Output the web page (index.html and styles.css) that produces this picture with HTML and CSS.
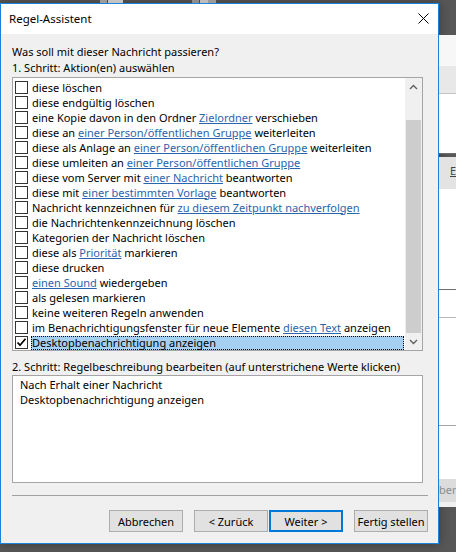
FILE: index.html
```html
<!DOCTYPE html>
<html lang="de">
<head>
    <meta charset="UTF-8">
    <meta name="viewport" content="width=device-width, initial-scale=1.0">
    <title>Regel-Assistent</title>
    <link rel="stylesheet" href="styles.css">
</head>
<body>
    <div class="desk">
        <!-- Rand des Fensters dahinter -->
        <div class="behind-top">
            <span class="seg seg-a"></span>
            <span class="seg seg-b"></span>
            <span class="seg seg-c"></span>
            <span class="seg seg-d"></span>
            <span class="seg seg-e"></span>
        </div>

        <div class="dialog">
            <div class="titlebar">
                <span class="title">Regel-Assistent</span>
                <svg class="close" width="11" height="11" viewBox="0 0 11 11">
                    <path d="M0.5 0.5 L10.5 10.5 M10.5 0.5 L0.5 10.5" stroke="#000" stroke-width="1" fill="none"/>
                </svg>
            </div>

            <div class="content">
                <p class="prompt">Was soll mit dieser Nachricht passieren?</p>
                <p class="prompt">1. Schritt: Aktion(en) auswählen</p>

                <div class="listbox">
                    <ul class="actions">
                        <li class="action"><span class="check"></span><span class="label">diese löschen</span></li>
                        <li class="action"><span class="check"></span><span class="label">diese endgültig löschen</span></li>
                        <li class="action"><span class="check"></span><span class="label">eine Kopie davon in den Ordner <a class="link">Zielordner</a> verschieben</span></li>
                        <li class="action"><span class="check"></span><span class="label">diese an <a class="link">einer Person/öffentlichen Gruppe</a> weiterleiten</span></li>
                        <li class="action"><span class="check"></span><span class="label">diese als Anlage an <a class="link">einer Person/öffentlichen Gruppe</a> weiterleiten</span></li>
                        <li class="action"><span class="check"></span><span class="label">diese umleiten an <a class="link">einer Person/öffentlichen Gruppe</a></span></li>
                        <li class="action"><span class="check"></span><span class="label">diese vom Server mit <a class="link">einer Nachricht</a> beantworten</span></li>
                        <li class="action"><span class="check"></span><span class="label">diese mit <a class="link">einer bestimmten Vorlage</a> beantworten</span></li>
                        <li class="action"><span class="check"></span><span class="label">Nachricht kennzeichnen für <a class="link">zu diesem Zeitpunkt nachverfolgen</a></span></li>
                        <li class="action"><span class="check"></span><span class="label">die Nachrichtenkennzeichnung löschen</span></li>
                        <li class="action"><span class="check"></span><span class="label">Kategorien der Nachricht löschen</span></li>
                        <li class="action"><span class="check"></span><span class="label">diese als <a class="link">Priorität</a> markieren</span></li>
                        <li class="action"><span class="check"></span><span class="label">diese drucken</span></li>
                        <li class="action"><span class="check"></span><span class="label"><a class="link">einen Sound</a> wiedergeben</span></li>
                        <li class="action"><span class="check"></span><span class="label">als gelesen markieren</span></li>
                        <li class="action"><span class="check"></span><span class="label">keine weiteren Regeln anwenden</span></li>
                        <li class="action"><span class="check"></span><span class="label">im Benachrichtigungsfenster für neue Elemente <a class="link">diesen Text</a> anzeigen</span></li>
                        <li class="action selected">
                            <span class="check">
                                <svg width="11" height="11" viewBox="0 0 11 11">
                                    <path d="M1.5 5.5 L4 8.2 L9.5 1.8" stroke="#000" stroke-width="1.7" fill="none"/>
                                </svg>
                            </span>
                            <span class="label">Desktopbenachrichtigung anzeigen</span>
                        </li>
                    </ul>

                    <div class="scrollbar">
                        <div class="arrow">
                            <svg width="9" height="6" viewBox="0 0 9 6"><path d="M1 5 L4.5 1.5 L8 5" stroke="#606060" stroke-width="1.4" fill="none"/></svg>
                        </div>
                        <div class="track"><div class="thumb"></div></div>
                        <div class="arrow">
                            <svg width="9" height="6" viewBox="0 0 9 6"><path d="M1 1 L4.5 4.5 L8 1" stroke="#606060" stroke-width="1.4" fill="none"/></svg>
                        </div>
                    </div>
                </div>

                <p class="prompt step2">2. Schritt: Regelbeschreibung bearbeiten (auf unterstrichene Werte klicken)</p>
                <div class="description">
                    <div>Nach Erhalt einer Nachricht</div>
                    <div>Desktopbenachrichtigung anzeigen</div>
                </div>

                <div class="separator"></div>

                <div class="buttons">
                    <button class="btn">Abbrechen</button>
                    <button class="btn btn-back">&lt; Zurück</button>
                    <button class="btn btn-default">Weiter &gt;</button>
                    <button class="btn btn-finish">Fertig stellen</button>
                </div>
            </div>
        </div>
    </div>

    <!-- Outlook-Fenster rechts daneben -->
    <div class="backdrop">
        <div class="bd-head"></div>
        <div class="bd-ribbon"></div>
        <div class="bd-pane"></div>
        <div class="bd-band"><span class="bd-letter">E</span></div>
        <div class="bd-pane bd-tall"></div>
        <div class="bd-pane bd-short"></div>
        <div class="bd-pane bd-mid"></div>
        <div class="bd-pane bd-low"></div>
        <div class="bd-band bd-status">ber</div>
        <div class="bd-foot"></div>
    </div>
</body>
</html>
```

FILE: styles.css
```css
body {
    margin: 0;
    height: 552px;
    overflow: hidden;
    display: flex;
    background-color: #575757;
    font-family: "Segoe UI", "Noto Sans", sans-serif;
    font-size: 11px;
    color: #000;
}

.desk {
    width: 439px;
    flex: none;
}

/* schmaler Streifen vom Fenster dahinter */
.behind-top {
    height: 3px;
    display: flex;
}

.seg {
    height: 3px;
}

.seg-a { margin-left: 100px; width: 7px; background: #9c9c9c; }
.seg-b { margin-left: 1px; width: 15px; background: #c4c4c4; }
.seg-c { margin-left: 69px; width: 7px; background: #8e8e8e; }
.seg-d { margin-left: 1px; width: 8px; background: #bdbdbd; }
.seg-e { width: 8px; background: #9a9a9a; }

.dialog {
    height: 541px;
    box-sizing: border-box;
    border: 1px solid #1a82d9;
    background-color: #f0f0f0;
    box-shadow: 0 0 10px rgba(0,0,0,0.35);
    display: flex;
    flex-direction: column;
}

.titlebar {
    height: 30px;
    flex: none;
    background-color: #fff;
    display: flex;
    align-items: center;
    padding-left: 8px;
    padding-right: 9px;
}

.title {
    flex: 1;
    font-size: 11.5px;
    margin-top: -1px;
}

.close {
    margin-top: -1px;
}

.content {
    flex: 1;
    padding: 10px 10px 0 11px;
}

.prompt {
    margin: 0;
    line-height: 16px;
    white-space: nowrap;
}

/* Liste mit Aktionen */
.listbox {
    width: 411px;
    height: 274px;
    box-sizing: border-box;
    margin-top: 1px;
    border: 1px solid #a5a5a5;
    background-color: #fff;
    display: flex;
}

.actions {
    flex: 1;
    list-style: none;
    margin: 0;
    padding: 2px 1px 0 2px;
    overflow: hidden;
}

.action {
    height: 15px;
    display: flex;
    align-items: center;
}

.check {
    width: 13px;
    height: 13px;
    box-sizing: border-box;
    border: 1px solid #333;
    background-color: #fff;
    margin-right: 3px;
    flex: none;
    display: flex;
    align-items: center;
    justify-content: center;
}

.label {
    flex: 1;
    height: 14px;
    line-height: 12px;
    box-sizing: border-box;
    border: 1px solid transparent;
    white-space: nowrap;
}

.selected .label {
    background-color: #a6d0f1;
    border: 1px dotted #000;
}

.link {
    color: #2a64ad;
    text-decoration: underline;
    text-underline-offset: 1px;
}

.scrollbar {
    width: 17px;
    flex: none;
    background-color: #f0f0f0;
    display: flex;
    flex-direction: column;
}

.arrow {
    height: 17px;
    display: flex;
    align-items: center;
    justify-content: center;
}

.track {
    flex: 1;
    padding: 25px 1px 0 1px;
    display: flex;
}

.thumb {
    flex: 1;
    background-color: #cdcdcd;
}

.step2 {
    margin-top: 8px;
}

.description {
    width: 411px;
    height: 108px;
    box-sizing: border-box;
    border: 1px solid #a5a5a5;
    background-color: #fff;
    padding: 1px 0 0 7px;
    line-height: 15px;
}

.separator {
    margin-top: 12px;
    border-top: 1px solid #a0a0a0;
}

.buttons {
    display: flex;
    justify-content: flex-end;
    margin-top: 14px;
}

.btn {
    width: 74px;
    height: 22px;
    box-sizing: border-box;
    border: 1px solid #adadad;
    background-color: #e1e1e1;
    font-family: inherit;
    font-size: 11px;
    color: #000;
    padding: 0;
}

.btn-back {
    margin-left: 11px;
}

.btn-default {
    margin-left: 1px;
    border: 2px solid #0078d7;
}

.btn-finish {
    margin-left: 11px;
}

/* Fenster im Hintergrund */
.backdrop {
    flex: 1;
    display: flex;
    flex-direction: column;
    padding-top: 35px;
    font-size: 11px;
    color: #8c8c8c;
}

.bd-head {
    height: 31px;
    background-color: #f7f7f7;
}

.bd-ribbon {
    height: 27px;
    background-color: #e8e8e8;
    border-bottom: 1px solid #c4c4c4;
}

.bd-pane {
    height: 59px;
    background-color: #fff;
    border-bottom: 1px solid #6e6e6e;
}

.bd-band {
    height: 32px;
    margin-top: 3px;
    background-color: #e3e3e3;
    line-height: 28px;
    white-space: nowrap;
}

.bd-letter {
    margin-left: 11px;
    color: #444;
    text-decoration: underline;
}

.bd-tall {
    height: 100px;
}

.bd-short {
    height: 27px;
    border-bottom-color: #b8b8b8;
}

.bd-mid {
    height: 107px;
    border-bottom-color: #a4a4a4;
}

.bd-low {
    height: 53px;
    border-bottom: none;
}

.bd-status {
    height: 23px;
    margin-top: 0;
    background-color: #dcdcdc;
    line-height: 22px;
}

.bd-foot {
    height: 5px;
    background-color: #f0f0f0;
}
```
